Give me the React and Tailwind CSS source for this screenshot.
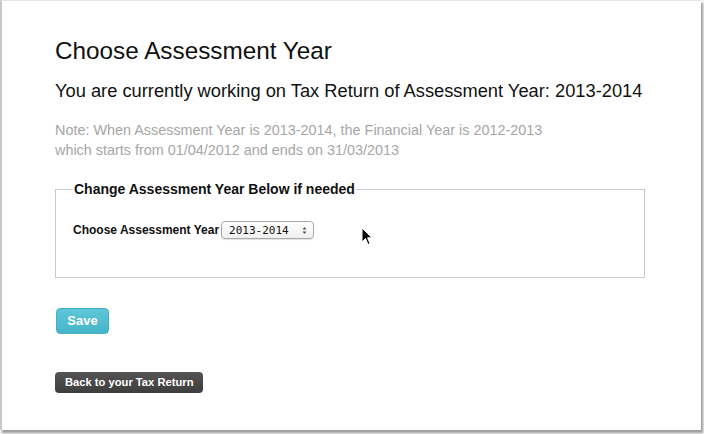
export default function App() {
  return (
    <div className="w-[704px] h-[434px] bg-[#f4f4f4] font-['Liberation_Sans',Arial,sans-serif]">
      <div className="relative w-[701px] h-[430px] bg-white border-l-2 border-t border-l-[#c8c8c8] border-t-[#e6e6e6] shadow-[2px_3px_2px_rgba(0,0,0,0.35)]">
        <div className="flex flex-col items-start pl-[53px] pr-[56px] pt-[35px]">
          <h1 className="text-[24.3px] leading-[30px] text-[#111]">Choose Assessment Year</h1>
          <p className="mt-[14px] text-[18.3px] leading-[22px] text-[#111]">
            You are currently working on Tax Return of Assessment Year: 2013-2014
          </p>
          <p className="mt-[18px] text-[14.4px] leading-[20px] text-[#a6a6a6]">
            Note: When Assessment Year is 2013-2014, the Financial Year is 2012-2013
            <br />
            which starts from 01/04/2012 and ends on 31/03/2013
          </p>

          <fieldset className="mt-[20px] h-[98px] w-full border border-[#c9c9c9] px-[17px] pb-0">
            <legend className="px-[1px] text-[14px] font-bold leading-[18px] text-[#111]">
              Change Assessment Year Below if needed
            </legend>
            <div className="mt-[23px] flex items-center gap-[2px]">
              <span className="text-[12px] font-bold text-[#111]">Choose Assessment Year</span>
              <div className="flex h-[18px] w-[93px] items-center justify-between rounded-[4px] border border-[#a9a9a9] bg-gradient-to-b from-white to-[#f0f0f0] pl-[7px] pr-[6px] shadow-[0_1px_1px_rgba(0,0,0,0.12)]">
                <span className="font-['DejaVu_Sans_Mono',monospace] text-[11px] leading-none text-[#111]">2013-2014</span>
                <svg width="5" height="9" viewBox="0 0 5 9">
                  <path d="M0.5 3.5 L2.5 1 L4.5 3.5 Z" fill="#555" />
                  <path d="M0.5 5.5 L2.5 8 L4.5 5.5 Z" fill="#555" />
                </svg>
              </div>
            </div>
          </fieldset>

          <button className="mt-[30px] ml-[1px] h-[26px] w-[53px] rounded-[4px] border border-[#46b0c4] bg-gradient-to-b from-[#5ec6d8] to-[#45b5c9] text-[13px] font-bold text-white">
            Save
          </button>
          <button className="mt-[38px] h-[21px] rounded-[4px] bg-gradient-to-b from-[#555] to-[#3d3d3d] px-[10px] text-[11.2px] font-bold text-white">
            Back to your Tax Return
          </button>
        </div>

        <svg className="absolute left-[359px] top-[226px]" width="12" height="19" viewBox="0 0 12 19">
          <path d="M1 1 L1 15 L4.5 11.5 L7 17.5 L9 16.6 L6.6 10.8 L11 10.8 Z" fill="#000" stroke="#fff" strokeWidth="1" />
        </svg>
      </div>
    </div>
  );
}
